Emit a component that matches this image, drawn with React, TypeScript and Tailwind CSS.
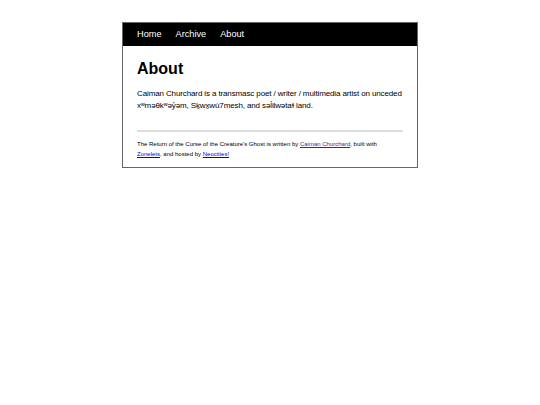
export default function App() {
  return (
    <div className="min-h-[405px] w-[540px] bg-white pt-[22px]" style={{ fontFamily: '"Liberation Sans", Arial, sans-serif' }}>
      <div className="ml-[122px] w-[296px] border border-[#666]">
        <nav className="flex h-[23px] items-center gap-[14px] bg-black px-[14px] text-[9.2px] text-white">
          <span>Home</span>
          <span>Archive</span>
          <span>About</span>
        </nav>
        <div className="px-[14px] pb-[8px] pt-[13px]">
          <h1 className="text-[16px] font-bold leading-[20px] text-black">About</h1>
          <p className="mt-[9px] text-[8px] leading-[12px] tracking-[-0.12px] text-black">
            Caiman Churchard is a transmasc poet / writer / multimedia artist on unceded xʷməθkʷəy̓əm, Sḵwx̱wú7mesh, and səl̓ilwətaɬ land.
          </p>
          <hr className="mt-[18px] border-t-2 border-[#ddd]" />
          <p className="mt-[7px] text-[6px] leading-[10px] text-black">
            The Return of the Curse of the Creature's Ghost is written by{" "}
            <a className="text-[#551a8b] underline">Caiman Churchard</a>, built with{" "}
            <a className="text-[#0000ee] underline">Zonelets</a>, and hosted by{" "}
            <a className="text-[#0000ee] underline">Neocities!</a>
          </p>
        </div>
      </div>
    </div>
  );
}
